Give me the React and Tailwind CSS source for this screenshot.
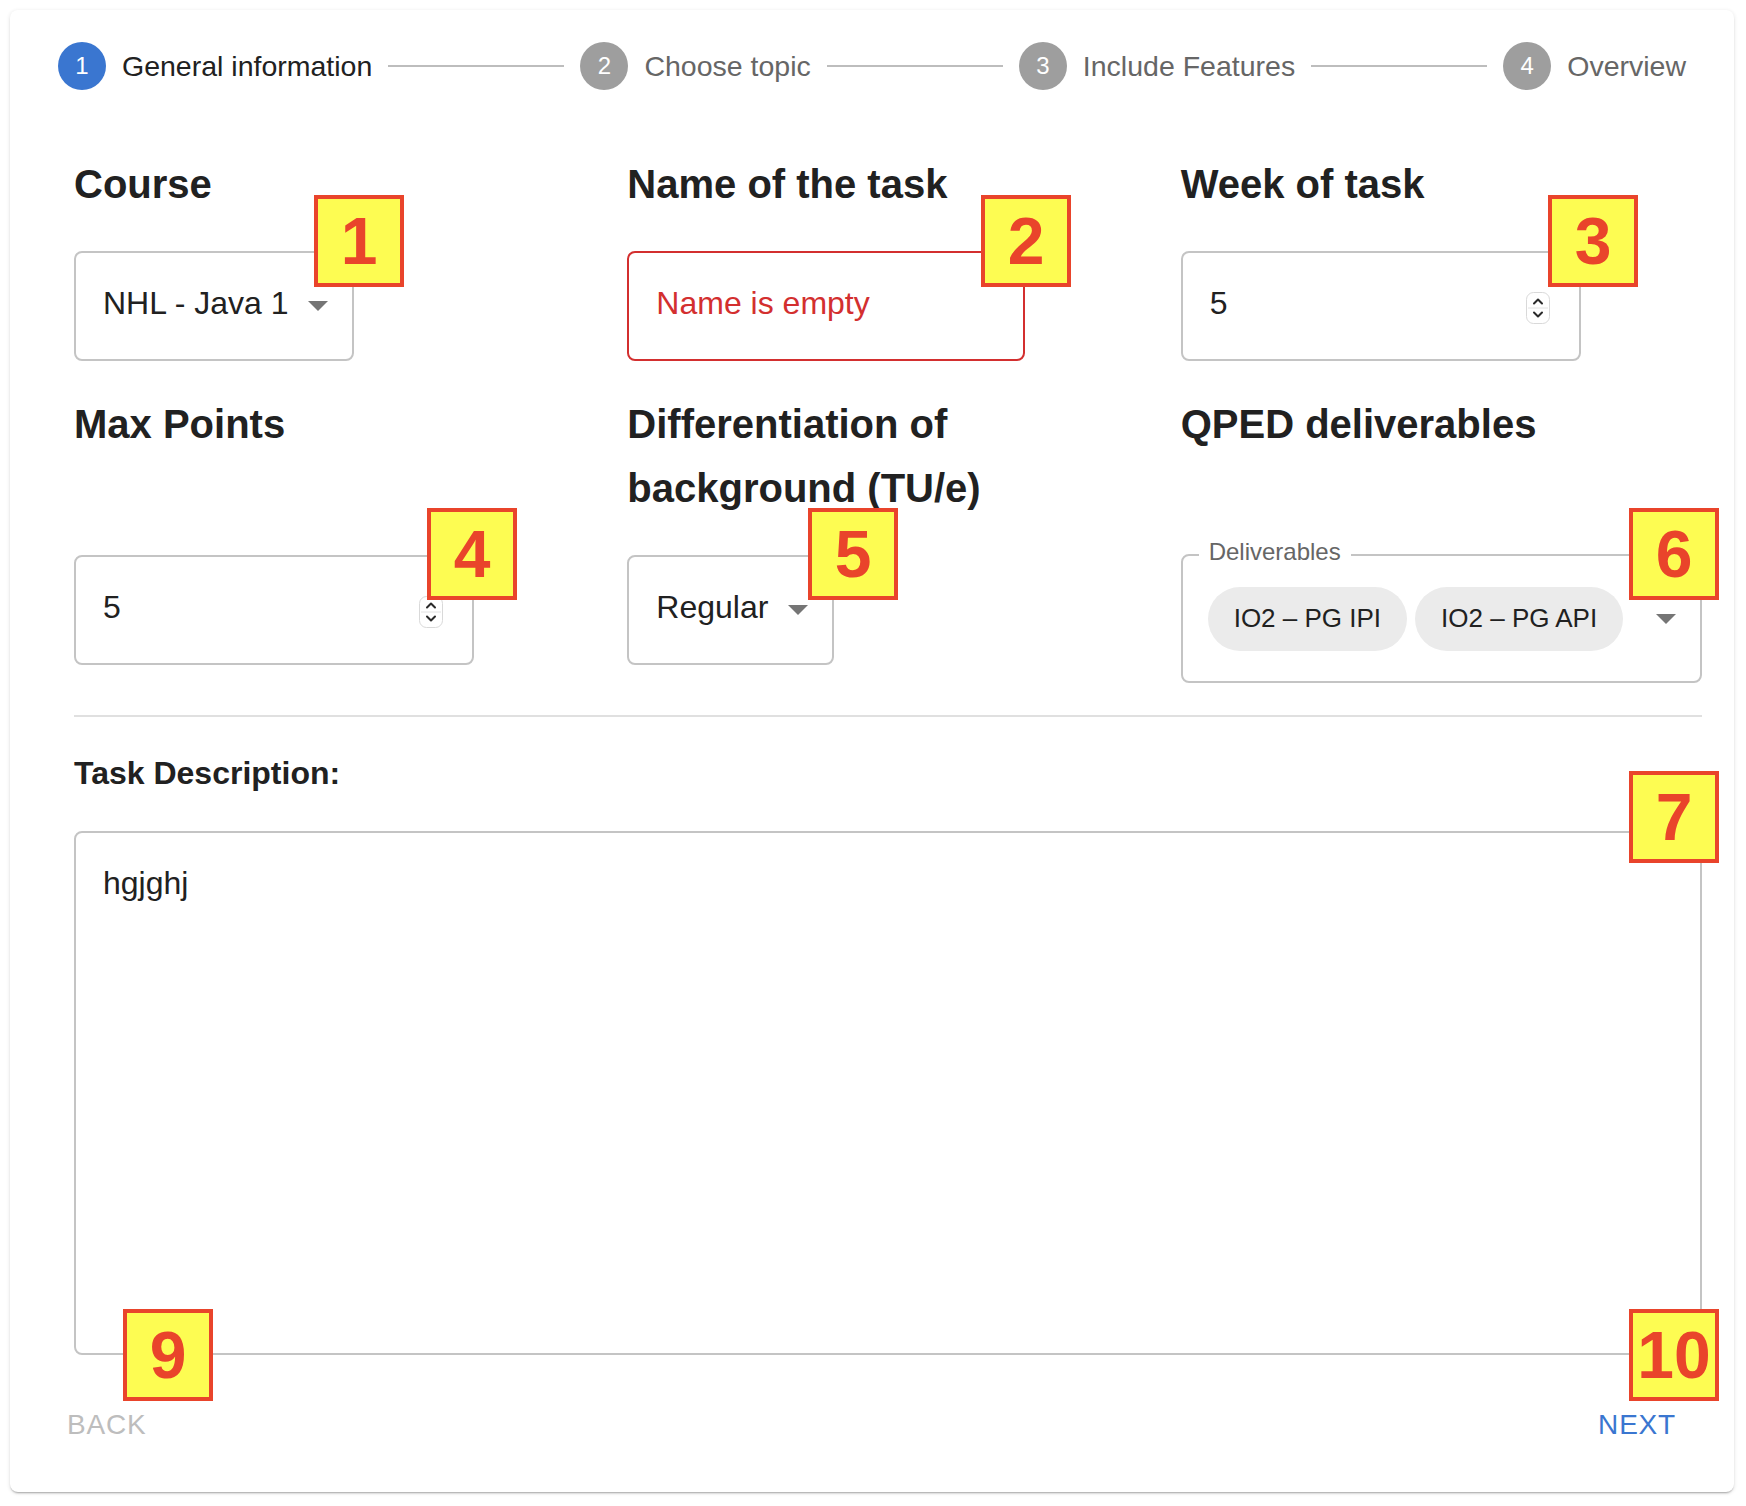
// App.jsx
// Task wizard card: stepper on top, a 3-column form grid, a description textarea and BACK / NEXT.
// Numbered yellow markers are overlays that sit on top of the fields.

import React from 'react'

const steps = ['General information', 'Choose topic', 'Include Features', 'Overview']

// --- small drawings ---
function DropArrow() {
  return (
    <svg width="20" height="10" viewBox="0 0 20 10">
      <path d="M0 0h20L10 10z" fill="#757575" />
    </svg>
  )
}

function Spinner() {
  return (
    <svg width="24" height="32" viewBox="0 0 24 32" fill="none">
      <rect x="0.5" y="0.5" width="23" height="31" rx="7" fill="#fff" stroke="#d9d9d9" />
      <path d="M2 16h20" stroke="#e2e2e2" />
      <path d="M8 11.5l4-4 4 4" stroke="#2a2a2a" strokeWidth="2" strokeLinecap="round" strokeLinejoin="round" />
      <path d="M8 20.5l4 4 4-4" stroke="#2a2a2a" strokeWidth="2" strokeLinecap="round" strokeLinejoin="round" />
    </svg>
  )
}

function Marker({ n, className }) {
  return (
    <div
      className={`absolute w-[90px] h-[92px] bg-[#fdfc52] border-4 border-[#e9442b] flex items-center justify-center text-[66px] font-bold leading-none text-[#e9442b] ${className}`}
    >
      {n}
    </div>
  )
}

function Heading({ children }) {
  return <div className="pl-8 text-[40px] font-bold leading-[64px] text-[#212121]">{children}</div>
}

function SelectBox({ value, className }) {
  return (
    <div className={`relative h-[110px] flex items-center pl-[27px] border-2 border-[#c4c4c4] rounded-lg text-[32px] text-[#212121] ${className}`}>
      <span className="mb-[6px]">{value}</span>
      <span className="absolute right-[24px] top-1/2 -translate-y-1/2 flex">
        <DropArrow />
      </span>
    </div>
  )
}

function NumberBox({ value }) {
  return (
    <div className="h-[110px] w-[400px] flex items-center justify-between pl-[27px] pr-[29px] border-2 border-[#c4c4c4] rounded-lg text-[32px] text-[#212121]">
      <span className="mb-[6px]">{value}</span>
      <span className="flex mt-1">
        <Spinner />
      </span>
    </div>
  )
}

export default function App() {
  return (
    <div className="min-h-screen bg-white p-[10px] font-['Liberation_Sans',Arial,sans-serif]">
      <div className="relative w-[1724px] bg-white rounded-lg p-8 pb-[31px] shadow-[0_2px_2px_-1px_rgba(0,0,0,0.3),0_1px_4px_rgba(0,0,0,0.12)]">
        {/* Stepper */}
        <div className="flex items-center h-12">
          {steps.map((s, i) => (
            <React.Fragment key={s}>
              {i > 0 && <div className="flex-1 h-[2px] bg-[#bdbdbd]" />}
              <div className="flex items-center gap-4 px-4">
                <div
                  className={`w-12 h-12 rounded-full flex items-center justify-center text-[24px] text-white ${
                    i === 0 ? 'bg-[#3a76d0]' : 'bg-[#9e9e9e]'
                  }`}
                >
                  {i + 1}
                </div>
                <span className={`text-[28.5px] ${i === 0 ? 'text-[#212121]' : 'text-[#666666]'}`}>{s}</span>
              </div>
            </React.Fragment>
          ))}
        </div>

        {/* Form grid */}
        <div className="grid grid-cols-3 items-start mt-[62px]">
          <Heading>Course</Heading>
          <Heading>Name of the task</Heading>
          <Heading>Week of task</Heading>

          <div className="pl-8 mt-[35px]">
            <SelectBox value="NHL - Java 1" className="w-[280px]" />
          </div>
          <div className="pl-8 mt-[35px]">
            <div className="h-[110px] w-[398px] flex items-center pl-[27px] border-2 border-[#d32f2f] rounded-lg text-[32px] text-[#d32f2f]">
              <span className="mb-[6px]">Name is empty</span>
            </div>
          </div>
          <div className="pl-8 mt-[35px]">
            <NumberBox value="5" />
          </div>

          <div className="mt-[31px]">
            <Heading>Max Points</Heading>
          </div>
          <div className="mt-[31px]">
            <Heading>
              Differentiation of
              <br />
              background (TU/e)
            </Heading>
          </div>
          <div className="mt-[31px]">
            <Heading>QPED deliverables</Heading>
          </div>

          <div className="pl-8 mt-[35px]">
            <NumberBox value="5" />
          </div>
          <div className="pl-8 mt-[35px]">
            <SelectBox value="Regular" className="w-[207px]" />
          </div>
          <div className="pl-8 mt-[34px]">
            <div className="relative h-[129px] flex items-center gap-2 pl-[25px] border-2 border-[#c4c4c4] rounded-lg">
              <span className="absolute -top-[16px] left-[16px] px-[10px] bg-white text-[24px] leading-[24px] text-[#666666]">
                Deliverables
              </span>
              <span className="h-16 px-[26px] flex items-center rounded-full bg-[#ebebeb] text-[26px] text-[#212121]">
                IO2 – PG IPI
              </span>
              <span className="h-16 px-[26px] flex items-center rounded-full bg-[#ebebeb] text-[26px] text-[#212121]">
                IO2 – PG API
              </span>
              <span className="absolute right-[24px] top-1/2 -translate-y-1/2 flex">
                <DropArrow />
              </span>
            </div>
          </div>
        </div>

        {/* Divider */}
        <div className="pl-8 mt-8">
          <div className="h-[2px] bg-[#e0e0e0]" />
        </div>

        {/* Description */}
        <div className="pl-8 mt-8 text-[32px] font-bold leading-[48px] text-[#212121]">Task Description:</div>
        <div className="pl-8 mt-[34px]">
          <div className="h-[524px] border-2 border-[#c4c4c4] rounded-lg pl-[27px] pt-[27px] text-[32px] leading-[46px] text-[#212121]">
            hgjghj
          </div>
        </div>

        {/* Buttons */}
        <div className="flex justify-between items-center mt-[33px] pl-[9px] pr-[10px]">
          <button className="px-4 py-3 text-[28px] leading-[49px] tracking-[0.8px] uppercase text-[#bdbdbd]">Back</button>
          <button className="px-4 py-3 text-[28px] leading-[49px] tracking-[0.8px] uppercase text-[#3a76d0]">Next</button>
        </div>

        {/* Annotation markers */}
        <Marker n="1" className="left-[304px] top-[185px]" />
        <Marker n="2" className="left-[971px] top-[185px]" />
        <Marker n="3" className="left-[1538px] top-[185px]" />
        <Marker n="4" className="left-[417px] top-[498px]" />
        <Marker n="5" className="left-[798px] top-[498px]" />
        <Marker n="6" className="left-[1619px] top-[498px]" />
        <Marker n="7" className="left-[1619px] top-[761px]" />
        <Marker n="9" className="left-[113px] top-[1299px]" />
        <Marker n="10" className="left-[1619px] top-[1299px]" />
      </div>
    </div>
  )
}
